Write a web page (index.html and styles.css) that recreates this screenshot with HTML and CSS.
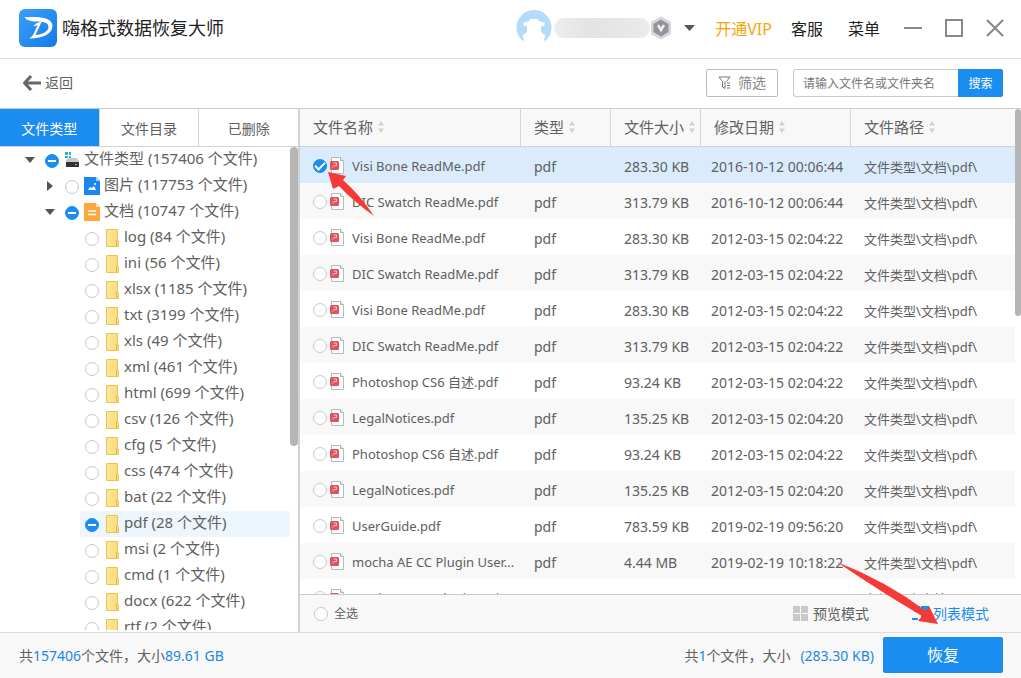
FILE: index.html
```
<!DOCTYPE html>
<html lang="zh-CN">
<head>
<meta charset="utf-8">
<title>嗨格式数据恢复大师</title>
<link rel="stylesheet" href="styles.css">
</head>
<body>
<svg class="sprite" aria-hidden="true">
  <defs>
    <linearGradient id="folder-fill" x1="0" y1="0" x2="1" y2="0"><stop offset="0" stop-color="#ffe698"/><stop offset="1" stop-color="#fcdc78"/></linearGradient>
  </defs>
  <symbol id="folder" viewBox="0 0 14 18"><path d="M.5.5h11v11l1 .5v5.500H.5z" fill="url(#folder-fill)" stroke="#e8c558"/><path d="M10.500 17V11l1.500-1" fill="none" stroke="#dfb848"/></symbol>
  <symbol id="pdf" viewBox="0 0 15 18"><path d="M1.500.5h9l3 3v13h-12z" fill="#fff" stroke="#b9b9b9"/><path d="M10.500.5v3h3" fill="#eee" stroke="#a9b5ad"/><rect x="0" y="4" width="9" height="9" rx="1.500" fill="#e0525c"/><path d="M2.500 10.500l1.500-2h2.500V6H3.500" fill="none" stroke="#fbdcdc" stroke-width=".8"/></symbol>
  <symbol id="sort" viewBox="0 0 6 14"><path d="M3 1l3 4.500H0zM3 13l3-4.500H0z" fill="#d2d2d2"/></symbol>
  <symbol id="grid" viewBox="0 0 15 15"><path d="M0 0h7v7H0zM8 0h7v7H8zM0 8h7v7H0zM8 8h7v7H8z" fill="currentColor"/></symbol>
</svg>

<header class="titlebar">
  <svg class="logo" viewBox="0 0 38 38" aria-hidden="true">
    <defs><linearGradient id="logo-fill" x1="0" y1="0" x2="1" y2="1"><stop offset="0" stop-color="#3ba0f7"/><stop offset="1" stop-color="#1479e8"/></linearGradient></defs>
    <rect width="38" height="38" rx="6" fill="url(#logo-fill)"/>
    <path d="M5.500 8C11 8.500 16 7.500 22 8.500 29 9.500 33.500 12 33.500 17 33.500 24 25 29.500 10 29.500c3-1.500 4-3.500 5-5.500l3.500-7.500c-1.500 0-3 .5-4 1 1.500-3 4-4.500 8-4.500L16.500 26c8-.5 13-4 13-8.500 0-4-6-5-12-5-5 0-10-1-12-4.500z" fill="#fff"/>
  </svg>
  <h1 class="app-name">嗨格式数据恢复大师</h1>
  <div class="account">
    <svg class="avatar" viewBox="0 0 36 36" aria-hidden="true"><circle cx="18" cy="17.500" r="17.500" fill="#b4dbfa"/><path d="M7 13l6-2 1-2h8l1 2 6 2-1 3h-3v6l4 3q1 2-1 4l2 7H6l2-7q-2-2-1-4l4-3v-6H8z" fill="#fff"/></svg>
    <span class="masked-name"></span>
    <svg class="badge" viewBox="0 0 22 24" aria-hidden="true"><path d="M11 .5l10 5.500v12l-10 5.500L1 18V6z" fill="#d5d5da"/><path d="M11 3.500l7.500 4.500v8L11 20.500 3.500 16V8z" fill="#92929c"/><path d="M8 9l3 5 3-5" fill="none" stroke="#eee" stroke-width="2.500"/></svg>
    <button class="caret-button" aria-label="账户菜单"><svg viewBox="0 0 11 6"><path d="M0 0h11L5.500 6z" fill="#555"/></svg></button>
  </div>
  <nav class="top-menu"><a class="vip" href="#">开通VIP</a><a href="#">客服</a><a href="#">菜单</a></nav>
  <div class="window-controls">
    <button aria-label="最小化"><svg viewBox="0 0 18 18"><path d="M0 9h18"/></svg></button>
    <button aria-label="最大化"><svg viewBox="0 0 18 18"><path d="M1 1h16v16H1z"/></svg></button>
    <button aria-label="关闭"><svg viewBox="0 0 18 18"><path d="M1 1l16 16M17 1L1 17"/></svg></button>
  </div>
</header>

<div class="toolbar">
  <button class="back"><svg viewBox="0 0 18 16" aria-hidden="true"><path d="M8 1L1.500 8 8 15M1.500 8H18"/></svg>返回</button>
  <button class="filter"><svg viewBox="0 0 13 13" aria-hidden="true"><path d="M1 1h11L8.500 5.500M1 1l3.500 4.500V11L7 12.500V5.500M9 7h3M9 9.500h3M9 12h3"/></svg>筛选</button>
  <form class="search"><input type="text" aria-label="搜索文件" placeholder="请输入文件名或文件夹名"><button type="button">搜索</button></form>
</div>

<main class="workspace">
  <aside class="sidebar">
    <div class="tabs"><button class="active">文件类型</button><button>文件目录</button><button>已删除</button></div>
    <div class="tree-area">
      <div class="tree">
        <div class="node root"><svg class="twist" viewBox="0 0 10 6"><path d="M0 0h10L5 6z"/></svg><label><input class="check partial" type="checkbox"><svg class="kind" viewBox="0 0 16 16"><path d="M1 0h3v3H1zM5 0h2v3H5zM1 4h3v2H1zM5 4h2v2H5z" fill="#22b5d8"/><path d="M5 6h8l2 4H2V8z" fill="#c6c9cc"/><path d="M2 10h13v5H2z" fill="#333"/><path d="M11 12h2v1h-2z" fill="#6de07a"/></svg><span>文件类型 (157406 个文件)</span></label></div>
        <div class="node group"><svg class="twist" viewBox="0 0 10 10"><path d="M2 0l6 5-6 5z"/></svg><label><input class="check" type="checkbox"><svg class="kind" viewBox="0 0 16 18"><path d="M0 0h12l4 4v14H0z" fill="#1b87ee"/><path d="M12 0v4h4z" fill="#a6d1fa"/><path d="M4 13l2-3 2 1 2-2 2 4z" fill="#fff"/><circle cx="11" cy="7" r="1" fill="#fff"/></svg><span>图片 (117753 个文件)</span></label></div>
        <div class="node group"><svg class="twist" viewBox="0 0 10 6"><path d="M0 0h10L5 6z"/></svg><label><input class="check partial" type="checkbox"><svg class="kind" viewBox="0 0 16 18"><path d="M0 0h12l4 4v14H0z" fill="#fca83c"/><path d="M12 0v4h4z" fill="#fde0b5"/><path d="M4 8h8M4 11.500h8" stroke="#fff" stroke-width="1.300"/></svg><span>文档 (10747 个文件)</span></label></div>
        <div class="node leaf"><label><input class="check" type="checkbox"><svg class="folder"><use href="#folder"/></svg><span>log (84 个文件)</span></label></div>
        <div class="node leaf"><label><input class="check" type="checkbox"><svg class="folder"><use href="#folder"/></svg><span>ini (56 个文件)</span></label></div>
        <div class="node leaf"><label><input class="check" type="checkbox"><svg class="folder"><use href="#folder"/></svg><span>xlsx (1185 个文件)</span></label></div>
        <div class="node leaf"><label><input class="check" type="checkbox"><svg class="folder"><use href="#folder"/></svg><span>txt (3199 个文件)</span></label></div>
        <div class="node leaf"><label><input class="check" type="checkbox"><svg class="folder"><use href="#folder"/></svg><span>xls (49 个文件)</span></label></div>
        <div class="node leaf"><label><input class="check" type="checkbox"><svg class="folder"><use href="#folder"/></svg><span>xml (461 个文件)</span></label></div>
        <div class="node leaf"><label><input class="check" type="checkbox"><svg class="folder"><use href="#folder"/></svg><span>html (699 个文件)</span></label></div>
        <div class="node leaf"><label><input class="check" type="checkbox"><svg class="folder"><use href="#folder"/></svg><span>csv (126 个文件)</span></label></div>
        <div class="node leaf"><label><input class="check" type="checkbox"><svg class="folder"><use href="#folder"/></svg><span>cfg (5 个文件)</span></label></div>
        <div class="node leaf"><label><input class="check" type="checkbox"><svg class="folder"><use href="#folder"/></svg><span>css (474 个文件)</span></label></div>
        <div class="node leaf"><label><input class="check" type="checkbox"><svg class="folder"><use href="#folder"/></svg><span>bat (22 个文件)</span></label></div>
        <div class="node leaf current"><label><input class="check partial" type="checkbox"><svg class="folder"><use href="#folder"/></svg><span>pdf (28 个文件)</span></label></div>
        <div class="node leaf"><label><input class="check" type="checkbox"><svg class="folder"><use href="#folder"/></svg><span>msi (2 个文件)</span></label></div>
        <div class="node leaf"><label><input class="check" type="checkbox"><svg class="folder"><use href="#folder"/></svg><span>cmd (1 个文件)</span></label></div>
        <div class="node leaf"><label><input class="check" type="checkbox"><svg class="folder"><use href="#folder"/></svg><span>docx (622 个文件)</span></label></div>
        <div class="node leaf"><label><input class="check" type="checkbox"><svg class="folder"><use href="#folder"/></svg><span>rtf (2 个文件)</span></label></div>
      </div>
      <div class="scroll-track"><div class="thumb tree-thumb"></div></div>
    </div>
  </aside>

  <section class="files">
    <div class="list-area">
      <div class="list">
        <table>
          <colgroup><col class="c-name"><col class="c-type"><col class="c-size"><col class="c-date"><col></colgroup>
          <thead><tr><th>文件名称<svg class="sort"><use href="#sort"/></svg></th><th>类型<svg class="sort"><use href="#sort"/></svg></th><th>文件大小<svg class="sort"><use href="#sort"/></svg></th><th>修改日期<svg class="sort"><use href="#sort"/></svg></th><th>文件路径<svg class="sort"><use href="#sort"/></svg></th></tr></thead>
          <tbody>
            <tr class="selected"><td><label><input class="check" type="checkbox" checked><svg class="pdf"><use href="#pdf"/></svg><span>Visi Bone ReadMe.pdf</span></label></td><td>pdf</td><td>283.30 KB</td><td>2016-10-12 00:06:44</td><td>文件类型\文档\pdf\</td></tr>
            <tr><td><label><input class="check" type="checkbox"><svg class="pdf"><use href="#pdf"/></svg><span>DIC Swatch ReadMe.pdf</span></label></td><td>pdf</td><td>313.79 KB</td><td>2016-10-12 00:06:44</td><td>文件类型\文档\pdf\</td></tr>
            <tr><td><label><input class="check" type="checkbox"><svg class="pdf"><use href="#pdf"/></svg><span>Visi Bone ReadMe.pdf</span></label></td><td>pdf</td><td>283.30 KB</td><td>2012-03-15 02:04:22</td><td>文件类型\文档\pdf\</td></tr>
            <tr><td><label><input class="check" type="checkbox"><svg class="pdf"><use href="#pdf"/></svg><span>DIC Swatch ReadMe.pdf</span></label></td><td>pdf</td><td>313.79 KB</td><td>2012-03-15 02:04:22</td><td>文件类型\文档\pdf\</td></tr>
            <tr><td><label><input class="check" type="checkbox"><svg class="pdf"><use href="#pdf"/></svg><span>Visi Bone ReadMe.pdf</span></label></td><td>pdf</td><td>283.30 KB</td><td>2012-03-15 02:04:22</td><td>文件类型\文档\pdf\</td></tr>
            <tr><td><label><input class="check" type="checkbox"><svg class="pdf"><use href="#pdf"/></svg><span>DIC Swatch ReadMe.pdf</span></label></td><td>pdf</td><td>313.79 KB</td><td>2012-03-15 02:04:22</td><td>文件类型\文档\pdf\</td></tr>
            <tr><td><label><input class="check" type="checkbox"><svg class="pdf"><use href="#pdf"/></svg><span>Photoshop CS6 自述.pdf</span></label></td><td>pdf</td><td>93.24 KB</td><td>2012-03-15 02:04:22</td><td>文件类型\文档\pdf\</td></tr>
            <tr><td><label><input class="check" type="checkbox"><svg class="pdf"><use href="#pdf"/></svg><span>LegalNotices.pdf</span></label></td><td>pdf</td><td>135.25 KB</td><td>2012-03-15 02:04:20</td><td>文件类型\文档\pdf\</td></tr>
            <tr><td><label><input class="check" type="checkbox"><svg class="pdf"><use href="#pdf"/></svg><span>Photoshop CS6 自述.pdf</span></label></td><td>pdf</td><td>93.24 KB</td><td>2012-03-15 02:04:22</td><td>文件类型\文档\pdf\</td></tr>
            <tr><td><label><input class="check" type="checkbox"><svg class="pdf"><use href="#pdf"/></svg><span>LegalNotices.pdf</span></label></td><td>pdf</td><td>135.25 KB</td><td>2012-03-15 02:04:20</td><td>文件类型\文档\pdf\</td></tr>
            <tr><td><label><input class="check" type="checkbox"><svg class="pdf"><use href="#pdf"/></svg><span>UserGuide.pdf</span></label></td><td>pdf</td><td>783.59 KB</td><td>2019-02-19 09:56:20</td><td>文件类型\文档\pdf\</td></tr>
            <tr><td><label><input class="check" type="checkbox"><svg class="pdf"><use href="#pdf"/></svg><span>mocha AE CC Plugin User...</span></label></td><td>pdf</td><td>4.44 MB</td><td>2019-02-19 10:18:22</td><td>文件类型\文档\pdf\</td></tr>
            <tr><td><label><input class="check" type="checkbox"><svg class="pdf"><use href="#pdf"/></svg><span>mocha AE CC Plugin Quic...</span></label></td><td></td><td></td><td></td><td>文件类型\文档\pdf\</td></tr>
          </tbody>
        </table>
      </div>
      <div class="scroll-track"><div class="thumb list-thumb"></div></div>
    </div>
    <div class="list-footer">
      <label class="select-all"><input class="check" type="checkbox">全选</label>
      <div class="view-modes">
        <button><svg class="grid"><use href="#grid"/></svg>预览模式</button>
        <button class="active"><svg viewBox="0 0 17 15" class="list-icon"><path d="M2 0h6v6H2zM9 0h8v6H9zM0 12h6v2H0zM9 8h8v6H9z" fill="currentColor"/></svg>列表模式</button>
      </div>
    </div>
  </section>
</main>

<footer class="statusbar">
  <p>共<b>157406</b>个文件，大小<b>89.61 GB</b></p>
  <p class="picked">共<b>1</b>个文件，大小<b class="picked-size">(283.30 KB)</b></p>
  <button class="recover">恢复</button>
</footer>

<svg class="pointer first" viewBox="0 0 48 46" aria-hidden="true"><path d="M1 1l18 4-3 4q17 15 31 36Q26 30 12 15l-6 3z"/></svg>
<svg class="pointer second" viewBox="0 0 104 64" aria-hidden="true"><path d="M1 1Q50 20 90 50l3-5 9 18-20-3 4-5Q42 29 1 1z"/></svg>
</body>
</html>
```
FILE: styles.css
```
* { box-sizing: border-box; }
body {
  margin: 0;
  height: 100vh;
  display: flex;
  flex-direction: column;
  position: relative;
  overflow: hidden;
  background: #fff;
  color: #606060;
  font-family: "Noto Sans", "Noto Sans CJK SC", sans-serif;
  font-size: 14px;
  line-height: 20px;
}
button, input { font: inherit; color: inherit; }
button { border: 0; padding: 0; background: none; display: flex; align-items: center; justify-content: center; white-space: nowrap; }
a { color: inherit; text-decoration: none; }
svg { flex: none; display: block; }
h1, p { margin: 0; }
.sprite { position: absolute; width: 0; height: 0; }

.titlebar { display: flex; align-items: center; height: 59px; flex: none; padding: 0 17px 2px 19px; border-bottom: 1px solid #e0e0e0; }
.logo { width: 38px; height: 38px; }
.app-name { margin-left: 5px; font-size: 18px; line-height: 26px; font-weight: 400; color: #222; }
.account { display: flex; align-items: center; margin-left: auto; }
.avatar { width: 36px; height: 36px; }
.masked-name { width: 96px; height: 20px; margin-left: 2px; border-radius: 10px; background: linear-gradient(90deg, #eee, #e3e3e3 40%, #ebebeb); }
.badge { width: 22px; height: 24px; }
.caret-button { margin-left: 12px; }
.caret-button svg { width: 11px; height: 6px; }
.top-menu { display: flex; gap: 25px; margin-left: 20px; padding-top: 2px; font-size: 16px; line-height: 24px; color: #222; }
.top-menu a { white-space: nowrap; }
.top-menu .vip { color: #f5a50e; margin-right: -6px; }
.window-controls { display: flex; gap: 23px; margin-left: 24px; }
.window-controls svg { width: 18px; height: 18px; fill: none; stroke: #888; stroke-width: 2; }

.toolbar { display: flex; align-items: center; height: 50px; flex: none; padding: 0 18px 2px 23px; border-bottom: 1px solid #ccc; }
.back { gap: 4px; }
.back svg { width: 18px; height: 16px; fill: none; stroke: #666; stroke-width: 3; }
.filter { margin-left: auto; width: 72px; height: 28px; gap: 7px; border: 1px solid #bbb; border-radius: 2px; color: #888; }
.filter svg { width: 13px; height: 13px; fill: none; stroke: #777; }
.search { display: flex; margin-left: 15px; height: 28px; width: 210px; font-size: 12px; }
.search input { flex: 1; min-width: 0; padding: 2px 9px 0; border: 1px solid #ccc; border-right: 0; border-radius: 3px 0 0 3px; background: #fff; outline: 0; }
.search input::placeholder { color: #777; }
.search button { width: 45px; padding-top: 2px; background: #1b8df0; color: #fff; border-radius: 0 2px 2px 0; }

.workspace { display: flex; flex: 1; min-height: 0; }
.sidebar { display: flex; flex-direction: column; width: 300px; flex: none; border-right: 2px solid #d2d2d2; }
.tabs { display: flex; height: 38px; flex: none; border-bottom: 1px solid #d0d4d8; }
.tabs button { flex: 1; padding-top: 2px; border-right: 1px solid #d5d5d5; }
.tabs button:last-child { border-right: 0; }
.tabs .active { background: #1b8df0; color: #fff; }
.tree-area { display: flex; flex: 1; min-height: 0; padding-bottom: 2px; }
.tree { flex: 1; overflow: hidden; font-size: 15px; }
.node { display: flex; align-items: center; height: 26px; white-space: nowrap; }
.node label { display: flex; align-items: center; }
.node span { padding-bottom: 4px; }
.node .check { margin-top: 1px; }
.root { padding-left: 25px; }
.group { padding-left: 45px; }
.leaf { margin-left: 80px; padding-left: 5px; }
.current { background: #eef6fd; }
.twist { width: 10px; height: 10px; margin-right: 10px; fill: #555; }
.kind { width: 16px; height: 18px; margin: 0 4px 0 5px; }
.folder { width: 14px; height: 18px; margin: 0 4px 0 7px; }
.scroll-track { width: 8px; flex: none; }
.thumb { border-radius: 4px; background: #b5b5b5; }
.tree-thumb { height: 299px; }
.list-thumb { height: 207px; }

.check { appearance: none; flex: none; display: grid; place-items: center; width: 14px; height: 14px; margin: 0; border: 1px solid #c8c8c8; border-radius: 50%; background: #fff; }
.check.partial, .check:checked { border-color: #1b8df0; background: #1b8df0; }
.check.partial::after { content: ""; width: 8px; height: 2px; background: #fff; }
.check:checked::after { content: ""; width: 8px; height: 4px; margin-bottom: 2px; border: solid #fff; border-width: 0 0 2px 2px; rotate: -45deg; }

.files { display: flex; flex-direction: column; flex: 1; min-width: 0; }
.list-area { display: flex; flex: 1; min-height: 0; }
.list-area .scroll-track { width: 6px; }
.list { flex: 1; min-width: 0; overflow: hidden; }
table { width: 100%; table-layout: fixed; border-collapse: separate; border-spacing: 0; }
.c-name { width: 221px; }
.c-type, .c-size { width: 90px; }
.c-date { width: 150px; }
th { height: 38px; padding: 0 0 2px 13px; text-align: left; font-size: 15px; font-weight: 400; background: #f8f8f8; border-right: 1px solid #d2d6da; border-bottom: 1px solid #d0d4d8; white-space: nowrap; }
th:last-child { border-right: 0; }
td { height: 36px; padding: 4px 0 0 13px; white-space: nowrap; }
td:first-child { padding-top: 2px; font-size: 13px; }
td:nth-child(4) { padding-left: 10px; }
td:last-child { font-size: 13px; }
tbody tr:nth-child(even) { background: #f8f8f8; }
tbody .selected { background: #daecfc; }
td label { display: flex; align-items: center; }
td span { margin-left: 7px; }
.pdf { width: 15px; height: 18px; margin-left: 3px; }
.sort { display: inline-block; width: 6px; height: 14px; margin-left: 5px; vertical-align: -1px; }

.list-footer { display: flex; justify-content: space-between; align-items: center; height: 38px; flex: none; padding: 0 32px 0 14px; border-top: 1px solid #ccc; background: #f8f8f8; }
.select-all { display: flex; align-items: center; gap: 6px; font-size: 12px; }
.view-modes { display: flex; gap: 43px; }
.view-modes button { gap: 5px; }
.view-modes .active { gap: 4px; color: #1b8df0; }
.grid { width: 15px; height: 15px; color: #c8c8c8; }
.list-icon { width: 17px; height: 15px; }

.statusbar { display: flex; align-items: center; height: 46px; flex: none; padding: 0 18px 0 19px; border-top: 1px solid #ddd; background: #f8f8f8; }
.statusbar b { font-weight: 400; color: #1b87e6; }
.picked { margin-left: auto; }
.picked-size { margin-left: 10px; }
.recover { width: 120px; height: 36px; margin: 0 0 2px 9px; border-radius: 2px; background: #1b8df0; color: #fff; font-size: 16px; }

.pointer { position: absolute; fill: #f43a38; pointer-events: none; }
.first { left: 327px; top: 171px; width: 48px; height: 46px; }
.second { left: 836px; top: 561px; width: 104px; height: 64px; }
```
